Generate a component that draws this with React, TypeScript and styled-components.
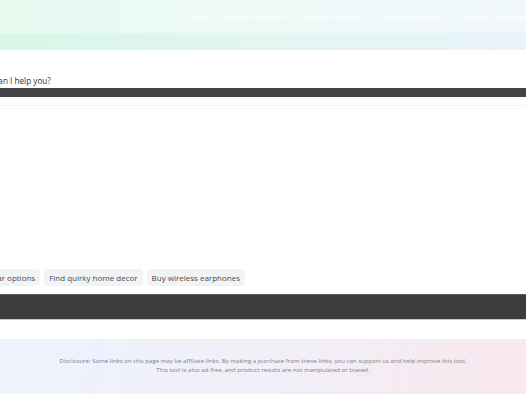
import styled, { createGlobalStyle } from 'styled-components';

const GlobalStyle = createGlobalStyle`
  html, body {
    margin: 0;
    padding: 0;
    background: #ffffff;
    overflow: hidden;
  }
  body {
    font-family: 'Open Sans', 'Noto Sans', sans-serif;
  }
`;

/** layout */
const Page = styled.div`
  width: 526px;
  height: 394px;
  display: flex;
  flex-direction: column;
  overflow: hidden;
`;

const Header = styled.header`
  height: 33px;
  flex-shrink: 0;
  display: flex;
  align-items: center;
  padding-left: 190px;
  background: linear-gradient(100deg, #e6faf0 0%, #eef9f6 45%, #f1f7fc 100%);
  white-space: nowrap;
`;

const Nav = styled.nav`
  display: flex;
  align-items: center;
  gap: 13px;
`;

const NavItem = styled.a`
  display: flex;
  align-items: center;
  gap: 3px;
  font-family: 'Lato', sans-serif;
  font-size: 7.6px;
  color: #ffffff;
  text-decoration: none;
`;

const Band = styled.div`
  height: 17px;
  flex-shrink: 0;
  background: linear-gradient(100deg, #d7f7e8 0%, #e2f6f0 45%, #e8f3fb 100%);
`;

const Main = styled.main`
  flex: 1;
  display: flex;
  flex-direction: column;
`;

const Inner = styled.div<{ $shift: number }>`
  margin-left: ${(p) => p.$shift}px;
  white-space: nowrap;
`;

const Title = styled.h1`
  margin: 25px 0 0;
  font-size: 8.2px;
  line-height: 12px;
  font-weight: 400;
  color: #333333;
`;

const InputBar = styled.div`
  height: 9px;
  margin-top: 1px;
  background: #434343;
`;

const Divider = styled.div`
  height: 1px;
  margin-top: 8px;
  background: #f4f4f4;
`;

const Spacer = styled.div`
  flex: 1;
`;

const Chips = styled.div`
  display: flex;
  gap: 4px;
  margin-bottom: 8px;
`;

const Chip = styled.span`
  display: inline-flex;
  align-items: center;
  height: 17px;
  padding: 0 5px;
  border-radius: 4px;
  background: #f2f3f5;
  color: #4b4b52;
  font-size: 8px;
`;

const SendBar = styled.div`
  height: 24px;
  background: #3c3c3c;
  border-top: 1px solid #5e5e5e;
  border-bottom: 1px solid #c9c9c9;
`;

const Footer = styled.footer`
  margin-top: 19px;
  height: 55px;
  flex-shrink: 0;
  display: flex;
  flex-direction: column;
  align-items: center;
  padding-top: 17px;
  box-sizing: border-box;
  background: linear-gradient(100deg, #edf3fd 0%, #f1eff8 50%, #f9e8ee 100%);
`;

const FooterText = styled.p`
  margin: 0;
  font-size: 6.1px;
  line-height: 9px;
  color: #7b7f88;
  text-align: center;
`;

const Chevron = () => (
  <svg width="7" height="7" viewBox="0 0 10 10" fill="none">
    <path d="M2 3.5 L5 6.5 L8 3.5" stroke="#ffffff" strokeWidth="1.6" strokeLinecap="round" strokeLinejoin="round" />
  </svg>
);

const navItems = [
  { label: 'Home', menu: false },
  { label: 'Shop by Purpose', menu: true },
  { label: 'Shop by Occasion', menu: true },
  { label: 'Travel Essentials', menu: true },
  { label: 'Product Comparisons', menu: false },
];

const suggestions = ['Compare car options', 'Find quirky home decor', 'Buy wireless earphones'];

function App() {
  return (
    <>
      <GlobalStyle />
      <Page>
        <Header>
          <Nav>
            {navItems.map((item) => (
              <NavItem key={item.label} href="#">
                {item.label}
                {item.menu && <Chevron />}
              </NavItem>
            ))}
          </Nav>
        </Header>
        <Band />
        <Main>
          <Inner $shift={-25}>
            <Title>How can I help you?</Title>
          </Inner>
          <InputBar />
          <Divider />
          <Spacer />
          <Inner $shift={-48}>
            <Chips>
              {suggestions.map((s) => (
                <Chip key={s}>{s}</Chip>
              ))}
            </Chips>
          </Inner>
          <SendBar />
        </Main>
        <Footer>
          <FooterText>
            Disclosure: Some links on this page may be affiliate links. By making a purchase from these links, you can
            support us and help improve this tool.
          </FooterText>
          <FooterText>This tool is also ad-free, and product results are not manipulated or biased.</FooterText>
        </Footer>
      </Page>
    </>
  );
}

export default App;
